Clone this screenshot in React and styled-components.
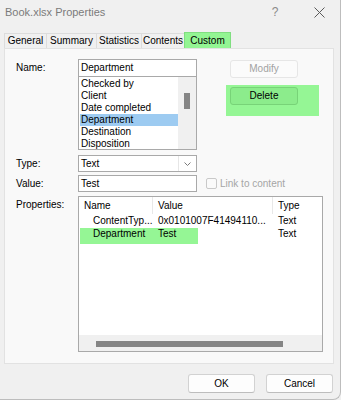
import React from 'react'
import styled, { createGlobalStyle } from 'styled-components'

const GlobalStyle = createGlobalStyle`
  html, body { margin: 0; padding: 0; background: #f0f0f0; }
  body {
    font-family: "Liberation Sans", Arial, sans-serif;
    font-size: 10px;
    color: #000;
  }
  * { box-sizing: border-box; }
`

const Dialog = styled.div`
  width: 341px;
  height: 400px;
  display: flex;
  flex-direction: column;
  background: #f0f0f0;
  border-right: 1px solid #bdbdbd;
  border-bottom: 1px solid #bdbdbd;
  border-bottom-right-radius: 8px;
  overflow: hidden;
`

const TitleBar = styled.div`
  height: 24px;
  display: flex;
  align-items: center;
  padding: 0 15px 0 5px;
`

const Title = styled.div`
  font-size: 11px;
  color: #7b7b7b;
  flex: 1;
`

const Help = styled.div`
  width: 12px;
  text-align: center;
  font-size: 12px;
  color: #8a8a8a;
  margin-right: 32px;
`

const Close = styled.div`
  width: 12px;
  height: 12px;
  display: flex;
  align-items: center;
  justify-content: center;
`

const TabStrip = styled.div`
  margin-top: 8px;
  height: 16px;
  padding-left: 4px;
  display: flex;
  align-items: flex-end;
`

const Tab = styled.div`
  width: ${p => p.$w}px;
  height: ${p => (p.$active ? 16 : 15)}px;
  line-height: ${p => (p.$active ? 15 : 14)}px;
  text-align: center;
  background: ${p => (p.$active ? '#93f593' : '#f0f0f0')};
  border: 1px solid ${p => (p.$active ? '#80de80' : '#dcdcdc')};
  border-bottom: none;
  margin-right: -1px;
`

const Panel = styled.div`
  margin-left: 4px;
  width: 330px;
  height: 316px;
  background: #f9f9f9;
  border: 1px solid #e2e2e2;
  padding: 10px 0 0 11px;
  display: flex;
  flex-direction: column;
`

const FieldRow = styled.div`
  display: grid;
  grid-template-columns: 62px 119px auto;
  align-items: ${p => p.$align || 'center'};
  margin-top: ${p => p.$top || 0}px;
`

const Label = styled.div`
  line-height: ${p => p.$lh || 17}px;
  align-self: ${p => (p.$top ? 'start' : 'center')};
`

const NameCombo = styled.div`
  display: flex;
  flex-direction: column;
`

const TextInput = styled.div`
  height: ${p => p.$h || 17}px;
  background: #fff;
  border: 1px solid #a9a9a9;
  padding-left: 2px;
  line-height: ${p => (p.$h || 17) - 2}px;
`

const ListBox = styled.div`
  height: 73px;
  background: #fff;
  border: 1px solid #a9a9a9;
  border-top: none;
  display: flex;
  overflow: hidden;
`

const Items = styled.div`
  flex: 1;
  padding-top: 1px;
  overflow: hidden;
`

const Item = styled.div`
  height: 12px;
  line-height: 12px;
  margin-left: 1px;
  padding-left: 1px;
  white-space: nowrap;
  background: ${p => (p.$selected ? '#9dcbf1' : 'transparent')};
`

const VScroll = styled.div`
  width: 18px;
  background: #f0f0f0;
  padding: 16px 0 0 6px;
`

const VThumb = styled.div`
  width: 6px;
  height: 16px;
  background: #858585;
`

const ButtonColumn = styled.div`
  align-self: start;
  padding-left: 33px;
  display: flex;
  flex-direction: column;
  align-items: flex-start;
`

const Button = styled.div`
  width: ${p => p.$w || 68}px;
  height: ${p => p.$h || 18}px;
  line-height: ${p => (p.$h || 18) - 2}px;
  text-align: center;
  border-radius: 3px;
  border: 1px solid ${p => (p.$disabled ? '#e6e6e6' : '#d2d2d2')};
  border-bottom-color: ${p => (p.$disabled ? '#e6e6e6' : '#bdbdbd')};
  background: ${p => (p.$disabled ? '#fbfbfb' : '#fdfdfd')};
  color: ${p => (p.$disabled ? '#a2a2a2' : '#000')};
  margin-top: ${p => p.$top || 0}px;
`

const Highlight = styled.div`
  margin-top: 7px;
  margin-left: -4px;
  padding: 2px 21px 11px 4px;
  background: #95f695;
`

const GreenButton = styled(Button)`
  background: #8cec8c;
  border-color: #78d378;
`

const Select = styled.div`
  height: 17px;
  background: #fff;
  border: 1px solid #a9a9a9;
  display: flex;
`

const SelectText = styled.div`
  flex: 1;
  padding-left: 2px;
  line-height: 15px;
`

const SelectArrow = styled.div`
  width: 18px;
  border-left: 1px solid #e6e6e6;
  display: flex;
  align-items: center;
  justify-content: center;
`

const CheckWrap = styled.div`
  display: flex;
  align-items: center;
  margin-left: 9px;
  color: #a5a5a5;
`

const Checkbox = styled.div`
  width: 11px;
  height: 11px;
  border: 1px solid #c9c9c9;
  border-radius: 2px;
  background: #fafafa;
  margin-right: 3px;
`

const PropList = styled.div`
  grid-column: 2 / 4;
  width: 245px;
  height: 156px;
  background: #fff;
  border: 1px solid #a9a9a9;
  display: flex;
  flex-direction: column;
`

const Columns = styled.div`
  display: grid;
  grid-template-columns: 74px 120px 1fr;
  height: ${p => p.$h}px;
  line-height: ${p => p.$h}px;
  position: relative;
  ${p => p.$marked && `
    &::before {
      content: "";
      position: absolute;
      left: 1px;
      top: 1px;
      width: 118px;
      height: 16px;
      background: #95f695;
    }
  `}
`

const Cell = styled.div`
  position: relative;
  padding-left: ${p => p.$pad || 5}px;
  white-space: nowrap;
  overflow: hidden;
  border-right: ${p => (p.$sep ? '1px solid #e8e8e8' : 'none')};
`

const Filler = styled.div`
  flex: 1;
`

const HScroll = styled.div`
  height: 16px;
  background: #f0f0f0;
  padding: 6px 0 0 17px;
`

const HThumb = styled.div`
  width: 187px;
  height: 6px;
  background: #858585;
`

const Footer = styled.div`
  display: flex;
  justify-content: flex-end;
  gap: 11px;
  padding: 10px 7px 0 0;
`

const customNames = ['Checked by', 'Client', 'Date completed', 'Department', 'Destination', 'Disposition']

const properties = [
  { name: 'ContentTyp...', value: '0x0101007F41494110...', type: 'Text' },
  { name: 'Department', value: 'Test', type: 'Text', marked: true },
]

export default function App() {
  return (
    <>
      <GlobalStyle />
      <Dialog>
        <TitleBar>
          <Title>Book.xlsx Properties</Title>
          <Help>?</Help>
          <Close>
            <svg width="11" height="11" viewBox="0 0 11 11">
              <path d="M0.5 0.5 L10.5 10.5 M10.5 0.5 L0.5 10.5" stroke="#5a5a5a" strokeWidth="1" fill="none" />
            </svg>
          </Close>
        </TitleBar>

        <TabStrip>
          <Tab $w={43}>General</Tab>
          <Tab $w={51}>Summary</Tab>
          <Tab $w={46}>Statistics</Tab>
          <Tab $w={44}>Contents</Tab>
          <Tab $w={47} $active>Custom</Tab>
        </TabStrip>

        <Panel>
          <FieldRow $align="start">
            <Label $lh={18} $top>Name:</Label>
            <NameCombo>
              <TextInput $h={18}>Department</TextInput>
              <ListBox>
                <Items>
                  {customNames.map(n => (
                    <Item key={n} $selected={n === 'Department'}>{n}</Item>
                  ))}
                </Items>
                <VScroll><VThumb /></VScroll>
              </ListBox>
            </NameCombo>
            <ButtonColumn>
              <Button $disabled $top={1}>Modify</Button>
              <Highlight>
                <GreenButton>Delete</GreenButton>
              </Highlight>
            </ButtonColumn>
          </FieldRow>

          <FieldRow $top={5}>
            <Label>Type:</Label>
            <Select>
              <SelectText>Text</SelectText>
              <SelectArrow>
                <svg width="7" height="4" viewBox="0 0 7 4">
                  <path d="M0.5 0.5 L3.5 3.5 L6.5 0.5" stroke="#7a7a7a" strokeWidth="1" fill="none" />
                </svg>
              </SelectArrow>
            </Select>
          </FieldRow>

          <FieldRow $top={3}>
            <Label>Value:</Label>
            <TextInput>Test</TextInput>
            <CheckWrap>
              <Checkbox />
              Link to content
            </CheckWrap>
          </FieldRow>

          <FieldRow $top={4} $align="start">
            <Label $top>Properties:</Label>
            <PropList>
              <Columns $h={17}>
                <Cell $sep>Name</Cell>
                <Cell $sep>Value</Cell>
                <Cell>Type</Cell>
              </Columns>
              {properties.map(p => (
                <Columns key={p.name} $h={13} $marked={p.marked}>
                  <Cell $pad={14}>{p.name}</Cell>
                  <Cell>{p.value}</Cell>
                  <Cell>{p.type}</Cell>
                </Columns>
              ))}
              <Filler />
              <HScroll><HThumb /></HScroll>
            </PropList>
          </FieldRow>
        </Panel>

        <Footer>
          <Button $w={67} $h={19}>OK</Button>
          <Button $w={67} $h={19}>Cancel</Button>
        </Footer>
      </Dialog>
    </>
  )
}
